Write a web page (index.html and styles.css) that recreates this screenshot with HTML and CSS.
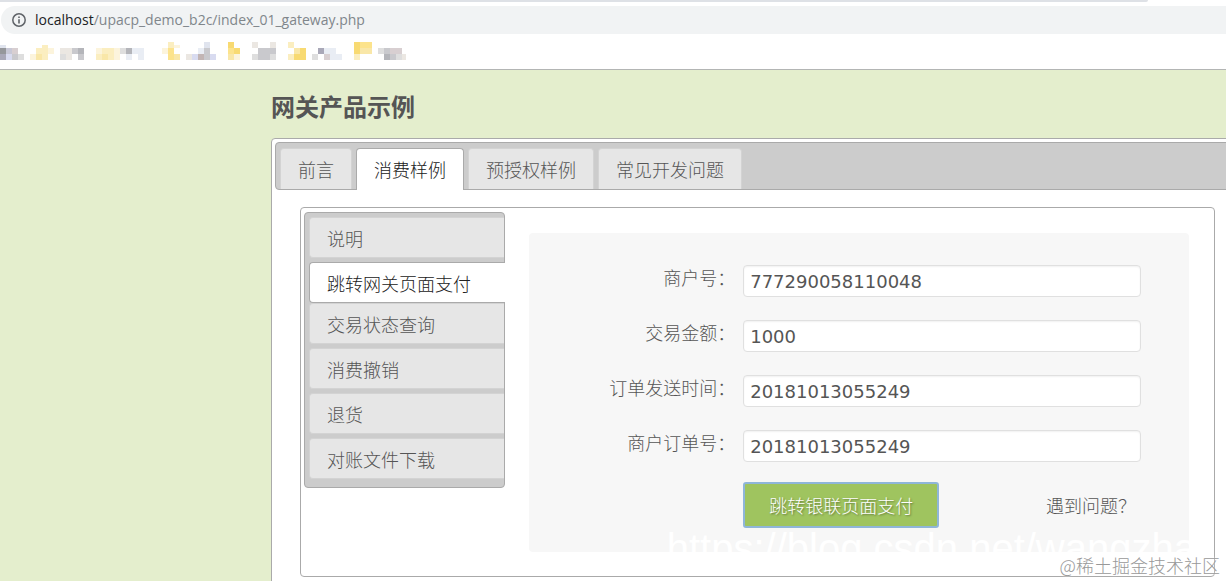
FILE: index.html
```
<!DOCTYPE html>
<html lang="zh-CN">
<head>
    <meta charset="UTF-8">
    <meta name="viewport" content="width=device-width, initial-scale=1.0">
    <title>网关产品示例</title>
    <link rel="stylesheet" href="styles.css">
</head>
<body>
    <header class="browser">
        <div class="tab-strip"></div>
        <div class="address-bar">
            <svg class="info-icon" width="16" height="16" viewBox="0 0 16 16" aria-hidden="true">
                <circle cx="8" cy="8" r="6.2" fill="none" stroke="#5f6368" stroke-width="1.5"/>
                <path d="M7.2 7.2h1.6v4.2H7.2zM7.2 4.5h1.6v1.6H7.2z" fill="#5f6368"/>
            </svg>
            <span class="url"><span class="host">localhost</span>/upacp_demo_b2c/index_01_gateway.php</span>
        </div>
        <svg class="bookmarks" width="410" height="18" viewBox="0 0 410 18" shape-rendering="crispEdges" aria-hidden="true">
            <path fill="#e0e4ee" d="M0 3h6v3H0zM204 0h6v6h-6z"/>
            <path fill="#95979b" d="M0 6h6v6H0z"/>
            <path fill="#a9a8b8" d="M0 12h6v6H0zM318 6h6v6h-6z"/>
            <path fill="#c8c8d6" d="M6 6h6v6H6z"/>
            <path fill="#d8dbf0" d="M6 12h6v6H6zM192 12h6v6h-6zM210 12h6v6h-6z"/>
            <path fill="#d8cfd1" d="M12 6h6v6h-6zM324 12h6v6h-6zM390 6h6v6h-6zM396 6h6v6h-6z"/>
            <path fill="#c9c9cd" d="M12 12h6v6h-6zM72 6h6v6h-6zM78 12h6v6h-6zM204 6h6v12h-6zM258 6h12v12h-12zM270 6h6v6h-6zM384 6h6v6h-6zM390 12h6v6h-6z"/>
            <path fill="#dedede" d="M18 12h6v6h-6zM60 12h6v6h-6zM120 6h6v6h-6zM252 12h6v6h-6zM270 12h6v6h-6zM378 6h6v6h-6zM396 12h6v6h-6zM312 12h6v6h-6z"/>
            <path fill="#fcf4dc" d="M30 12h6v6h-6zM48 6h6v6h-6zM96 6h6v6h-6zM114 6h6v12h-6zM162 6h6v6h-6zM174 3h6v3h-6zM234 12h6v6h-6z"/>
            <path fill="#fbeec0" d="M36 6h12v6H36zM42 3h6v3h-6zM42 12h6v6h-6zM102 6h12v6h-12zM96 12h6v6h-6zM108 12h6v6h-6zM168 0h6v6h-6zM288 0h6v6h-6zM288 12h6v6h-6zM354 12h6v6h-6z"/>
            <path fill="#f9e7a8" d="M36 12h6v6h-6zM102 12h6v6h-6zM174 12h6v6h-6zM228 12h6v6h-6zM294 6h6v6h-6zM360 6h12v6h-12z"/>
            <path fill="#fce38c" d="M168 6h6v12h-6zM228 6h6v6h-6zM360 0h12v6h-12z"/>
            <path fill="#f8da72" d="M228 0h6v6h-6zM234 6h6v6h-6zM294 12h12v6h-12zM300 6h6v6h-6zM354 0h6v12h-6z"/>
            <path fill="#ebe7e2" d="M66 6h6v6h-6zM60 6h6v6h-6zM66 12h6v6h-6zM252 0h6v6h-6zM270 0h6v6h-6zM186 12h6v6h-6zM402 12h4v6h-4z"/>
            <path fill="#b4b5ba" d="M78 6h6v6h-6zM126 6h6v6h-6zM384 12h6v6h-6z"/>
            <path fill="#c2b5b4" d="M198 12h6v6h-6z"/>
            <path fill="#e9edf4" d="M132 6h12v6h-12zM126 12h6v6h-6zM138 12h6v6h-6zM198 6h6v6h-6zM324 6h12v6h-12zM330 12h12v6h-12z"/>
        </svg>
    </header>

    <main class="container">
        <h1 class="title">网关产品示例</h1>
        <div class="tabs">
            <nav class="tab-nav">
                <a class="tab" href="#intro">前言</a>
                <a class="tab active" href="#sale">消费样例</a>
                <a class="tab" href="#preauth">预授权样例</a>
                <a class="tab" href="#faq">常见开发问题</a>
            </nav>
            <div class="panel">
                <nav class="side-nav">
                    <a class="side-item" href="#readme">说明</a>
                    <a class="side-item active" href="#pay">跳转网关页面支付</a>
                    <a class="side-item" href="#query">交易状态查询</a>
                    <a class="side-item" href="#undo">消费撤销</a>
                    <a class="side-item" href="#refund">退货</a>
                    <a class="side-item" href="#download">对账文件下载</a>
                </nav>
                <form class="pay-form">
                    <div class="row">
                        <label for="merId">商户号：</label>
                        <input id="merId" type="text" value="777290058110048">
                    </div>
                    <div class="row">
                        <label for="txnAmt">交易金额：</label>
                        <input id="txnAmt" type="text" value="1000">
                    </div>
                    <div class="row">
                        <label for="txnTime">订单发送时间：</label>
                        <input id="txnTime" type="text" value="20181013055249">
                    </div>
                    <div class="row">
                        <label for="orderId">商户订单号：</label>
                        <input id="orderId" type="text" value="20181013055249">
                    </div>
                    <div class="actions">
                        <button class="submit" type="button">跳转银联页面支付</button>
                        <a class="help" href="#faq">遇到问题？</a>
                    </div>
                </form>
            </div>
        </div>
    </main>

    <div class="watermark">https://blog.csdn.net/wangzha</div>
    <div class="credit">@稀土掘金技术社区</div>
</body>
</html>
```
FILE: styles.css
```
:root {
    --page-bg: #e4eecd;
    --border: #aaa;
    --bar: #ccc;
    --tab: #e6e6e6;
    --text: #555;
}

* {
    box-sizing: border-box;
}

body {
    position: relative;
    height: 100vh;
    margin: 0;
    overflow: hidden;
    background: var(--page-bg);
    color: var(--text);
    font: 300 18px/24px "Noto Sans CJK SC", sans-serif;
}

a {
    color: inherit;
    text-decoration: none;
}

/* browser bar */
.browser {
    height: 70px;
    background: #fff;
    border-bottom: 1px solid #b3b5b4;
}

.tab-strip {
    height: 2px;
    margin-right: 78px;
    background: #dee1e6;
    border-bottom-right-radius: 2px;
}

.address-bar {
    display: flex;
    align-items: center;
    gap: 8px;
    height: 28px;
    margin: 4px 0 0 1px;
    padding-left: 10px;
    background: #f1f3f4;
    border-radius: 14px 0 0 14px;
}

.url {
    color: #80868b;
    font: 400 14px/20px "Open Sans", sans-serif;
}

.host {
    color: #202124;
}

.bookmarks {
    display: block;
    margin-top: 8px;
}

/* page */
.container {
    margin: 0 -18px 0 271px;
}

.title {
    margin: 0;
    padding: 20px 0 16px;
    font-size: 24px;
    font-weight: 700;
    line-height: 32px;
}

.tabs {
    padding: 3px 3px 28px;
    background: #fff;
    border: 1px solid var(--border);
    border-radius: 4px;
}

.tab-nav {
    display: flex;
    gap: 4px;
    height: 48px;
    padding: 5px 4px 0;
    background: var(--bar);
    border: 1px solid var(--border);
    border-radius: 4px;
}

.tab {
    height: 41px;
    padding: 8px 17px;
    background: var(--tab);
    border: 1px solid #d3d3d3;
    border-bottom: 0;
    border-radius: 4px 4px 0 0;
    white-space: nowrap;
}

.tab.active {
    height: 42px;
    background: #fff;
    border-color: var(--border);
    color: #212121;
}

.panel {
    display: flex;
    align-items: flex-start;
    gap: 24px;
    margin: 17px 25px 0;
    padding: 4px 25px 24px 3px;
    border: 1px solid var(--border);
    border-radius: 4px;
}

.side-nav {
    display: flex;
    flex-direction: column;
    flex: 0 0 201px;
    gap: 4px;
    padding: 4px 0 8px 4px;
    background: var(--bar);
    border: 1px solid var(--border);
    border-radius: 4px;
}

.side-item {
    height: 41px;
    padding: 8px 17px;
    background: var(--tab);
    border: 1px solid #d3d3d3;
    border-right: 0;
    border-radius: 4px 0 0 4px;
}

.side-item.active {
    margin: 0 -1px -4px 0;
    background: #fff;
    border-color: var(--border);
    color: #212121;
}

/* form */
.pay-form {
    flex: 1;
    margin-top: 21px;
    padding: 32px 48px 24px 0;
    background: #f7f7f7;
    border-radius: 4px;
}

.row {
    display: flex;
    align-items: flex-start;
    margin-bottom: 23px;
}

.row label {
    flex: 1;
    padding-right: 8px;
    text-align: right;
}

.row input {
    flex: 0 0 65%;
    min-width: 0;
    height: 32px;
    padding: 0 6px;
    background: #fff;
    border: 1px solid #e0e0e0;
    border-radius: 4px;
    box-shadow: inset 0 1px 2px rgba(0, 0, 0, 0.06);
    color: var(--text);
    font: 18px "DejaVu Sans", sans-serif;
}

.actions {
    display: flex;
    align-items: center;
    justify-content: space-between;
    width: 65%;
    margin: -3px 0 0 auto;
}

.submit {
    height: 46px;
    padding: 0 24px;
    background: #9fc45f;
    border: 2px solid #8fb6d9;
    border-radius: 3px;
    color: #fff;
    font: inherit;
    text-shadow: 1px 1px 2px rgba(0, 0, 0, 0.4);
}

.help {
    padding-right: 5px;
}

/* marks over the page */
.watermark {
    position: absolute;
    right: 30px;
    bottom: 10px;
    color: #fff;
    font: 40px/46px "Liberation Sans", sans-serif;
    pointer-events: none;
}

.credit {
    position: absolute;
    right: 6px;
    bottom: 4px;
    color: #999;
    font-size: 18px;
    text-shadow: 0 0 2px #fff;
    pointer-events: none;
}
```
